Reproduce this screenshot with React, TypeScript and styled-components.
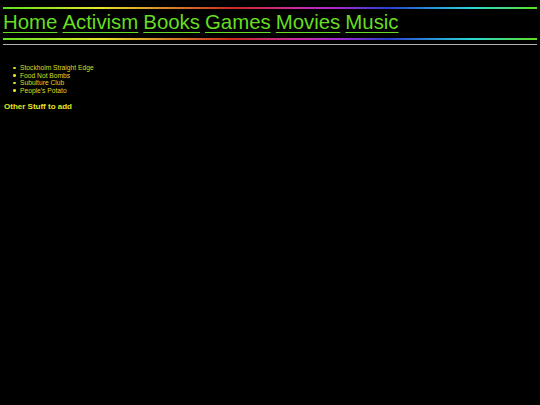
import React from "react";
import styled, { createGlobalStyle } from "styled-components";

const Global = createGlobalStyle`
  html, body { margin: 0; padding: 0; background: #000; }
  body { font-family: "Liberation Sans", Arial, sans-serif; }
`;

const Page = styled.div`
  padding: 7px 3px 0 3px;
  background: #000;
  min-height: 405px;
  box-sizing: border-box;
`;

const Rainbow = styled.div`
  height: 2px;
  background: linear-gradient(
    to right,
    #5fe021 0%,
    #e6e62a 18%,
    #d98a2a 30%,
    #cc2a22 43%,
    #cc2aa0 55%,
    #a42ad2 63%,
    #2a3ed2 72%,
    #2aa0d8 82%,
    #2ad8d0 88%,
    #5fe021 100%
  );
`;

const Nav = styled.nav`
  display: flex;
  gap: 5px;
  padding: 2px 0 4px 0;
  line-height: 23px;
  font-size: 20.4px;
`;

const NavLink = styled.a`
  color: #66dd22;
  text-decoration: underline;
  text-underline-offset: 3px;
  text-decoration-thickness: 1px;
`;

const Rule = styled.div`
  height: 1px;
  background: #b0b0b0;
  margin-top: 4px;
`;

const List = styled.ul`
  margin: 19px 0 0 0;
  padding-left: 10px;
  font-size: 6.7px;
  line-height: 7.5px;
  color: #dede22;
  list-style: none;
`;

const Item = styled.li`
  display: flex;
  align-items: center;
  gap: 4.5px;
  &::before {
    content: "";
    width: 2.5px;
    height: 2.5px;
    border-radius: 50%;
    background: #dede22;
    flex: none;
  }
`;

const SubHead = styled.h4`
  margin: 8px 0 0 1px;
  font-size: 8px;
  line-height: 10px;
  font-weight: bold;
  color: #e6e622;
`;

export default function App() {
  const links = ["Home", "Activism", "Books", "Games", "Movies", "Music"];
  const items = [
    "Stockholm Straight Edge",
    "Food Not Bombs",
    "Subulture Club",
    "People's Potato",
  ];
  return (
    <>
      <Global />
      <Page>
        <Rainbow />
        <Nav>
          {links.map((l) => (
            <NavLink key={l} href="#">
              {l}
            </NavLink>
          ))}
        </Nav>
        <Rainbow />
        <Rule />
        <List>
          {items.map((i) => (
            <Item key={i}>{i}</Item>
          ))}
        </List>
        <SubHead>Other Stuff to add</SubHead>
      </Page>
    </>
  );
}
